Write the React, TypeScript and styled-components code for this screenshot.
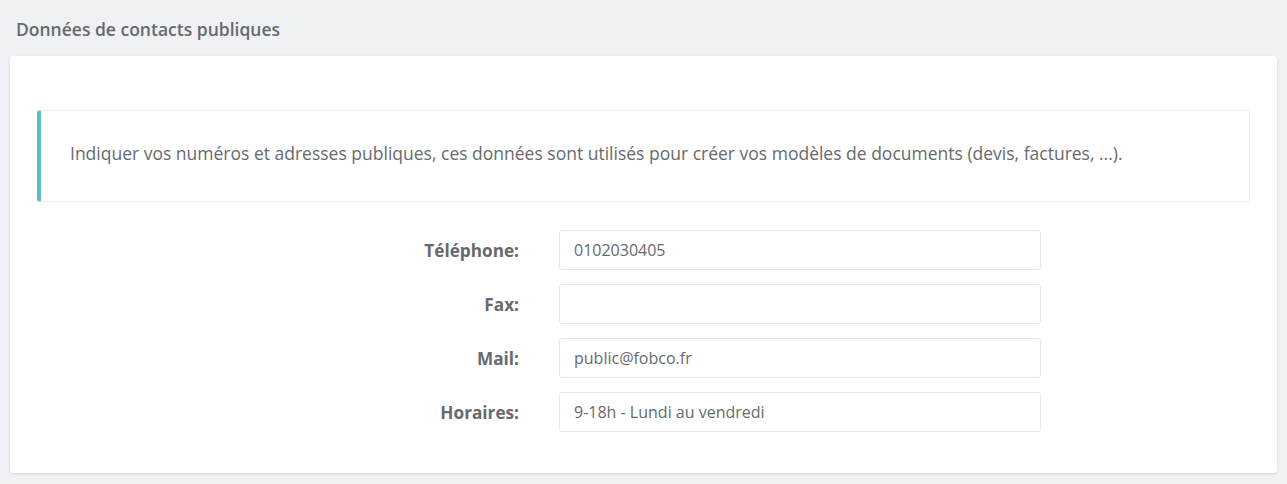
import React from "react";
import styled, { createGlobalStyle } from "styled-components";

const GlobalStyle = createGlobalStyle`
  html, body {
    margin: 0;
    padding: 0;
    background: #f0f1f5;
    font-family: "Open Sans", "Liberation Sans", sans-serif;
    color: #666;
  }
  * { box-sizing: border-box; }
`;

const Page = styled.div`
  padding: 17px 10px 11px 10px;
`;

const PageTitle = styled.h2`
  margin: 0 0 15px 6px;
  font-size: 17.5px;
  font-weight: 600;
  line-height: 24px;
  color: #666a6e;
`;

const Card = styled.div`
  background: #fff;
  border-radius: 3px;
  box-shadow: 0 1px 3px rgba(0, 0, 0, 0.12);
  padding: 54px 27px 41px 27px;
`;

const Callout = styled.div`
  border: 1px solid #eceef0;
  border-left: 4px solid #5bbccb;
  border-radius: 3px;
  padding: 30px 29px 36px 29px;
  font-size: 17.5px;
  line-height: 24px;
  color: #666a6e;
  margin-bottom: 28px;
`;

const Form = styled.form`
  display: grid;
  grid-template-columns: 482px 482px;
  column-gap: 40px;
  row-gap: 14px;
  align-items: center;
`;

const Label = styled.label`
  text-align: right;
  font-size: 17.2px;
  font-weight: 700;
  color: #666a6e;
`;

const Input = styled.input`
  height: 40px;
  width: 100%;
  padding: 0 14px;
  border: 1px solid #e4e6e9;
  border-radius: 3px;
  font-family: "Open Sans", "Liberation Sans", sans-serif;
  font-size: 16px;
  color: #666a6e;
  background: #fff;
  &:focus {
    outline: none;
  }
`;

const fields = [
  { id: "tel", label: "Téléphone:", value: "0102030405" },
  { id: "fax", label: "Fax:", value: "" },
  { id: "mail", label: "Mail:", value: "public@fobco.fr" },
  { id: "hours", label: "Horaires:", value: "9-18h - Lundi au vendredi" },
];

export default function App() {
  return (
    <>
      <GlobalStyle />
      <Page>
        <PageTitle>Données de contacts publiques</PageTitle>
        <Card>
          <Callout>
            Indiquer vos numéros et adresses publiques, ces données sont utilisés pour créer vos modèles de documents (devis, factures, ...).
          </Callout>
          <Form onSubmit={(e) => e.preventDefault()}>
            {fields.map((f) => (
              <React.Fragment key={f.id}>
                <Label htmlFor={f.id}>{f.label}</Label>
                <Input id={f.id} defaultValue={f.value} />
              </React.Fragment>
            ))}
          </Form>
        </Card>
      </Page>
    </>
  );
}
